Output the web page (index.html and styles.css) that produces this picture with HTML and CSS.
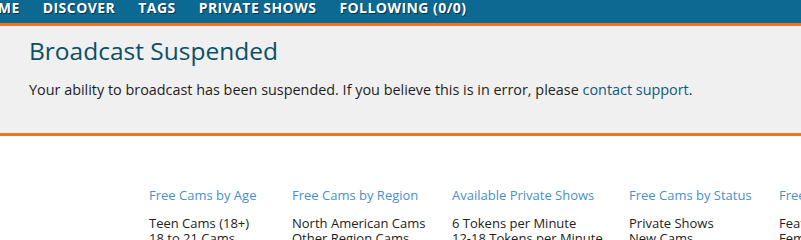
FILE: index.html
```html
<!DOCTYPE html>
<html>
<head>
<meta charset="utf-8">
<link rel="stylesheet" href="styles.css">
</head>
<body>
<nav class="topnav">
  <ul class="nav-list">
    <li>HOME</li>
    <li>DISCOVER</li>
    <li>TAGS</li>
    <li>PRIVATE SHOWS</li>
    <li>FOLLOWING (0/0)</li>
  </ul>
</nav>
<section class="notice">
  <h1 class="notice-title">Broadcast Suspended</h1>
  <p class="notice-text">Your ability to broadcast has been suspended. If you believe this is in error, please <a class="link" href="#">contact support</a>.</p>
</section>
<footer class="footer">
  <div class="col">
    <h3 class="col-title">Free Cams by Age</h3>
    <ul class="col-list"><li>Teen Cams (18+)</li><li>18 to 21 Cams</li><li>20 to 30 Cams</li></ul>
  </div>
  <div class="col">
    <h3 class="col-title">Free Cams by Region</h3>
    <ul class="col-list"><li>North American Cams</li><li>Other Region Cams</li><li>Euro Russian Cams</li></ul>
  </div>
  <div class="col">
    <h3 class="col-title">Available Private Shows</h3>
    <ul class="col-list"><li>6 Tokens per Minute</li><li>12-18 Tokens per Minute</li><li>30-42 Tokens per Minute</li></ul>
  </div>
  <div class="col">
    <h3 class="col-title">Free Cams by Status</h3>
    <ul class="col-list"><li>Private Shows</li><li>New Cams</li><li>Gaming Cams</li></ul>
  </div>
  <div class="col">
    <h3 class="col-title">Free Cams</h3>
    <ul class="col-list"><li>Featured Cams</li><li>Female Cams</li><li>Male Cams</li></ul>
  </div>
</footer>
</body>
</html>
```
FILE: styles.css
```css
html, body {
  margin: 0;
  padding: 0;
  background: #ffffff;
  font-family: "Open Sans", "DejaVu Sans", sans-serif;
  overflow: hidden;
}
.topnav {
  background: #0c6a92;
  border-bottom: 3px solid #f47321;
  height: 23px;
  overflow: hidden;
}
.nav-list {
  list-style: none;
  margin: 0 0 0 -25px;
  padding: 0;
  display: flex;
  gap: 23px;
  white-space: nowrap;
}
.nav-list li {
  color: #ffffff;
  font-size: 14px;
  font-weight: 700;
  line-height: 16px;
  letter-spacing: 0.45px;
  text-shadow: 1px 1px 0 #06334a;
}
.notice {
  background: #f0f0f0;
  border-bottom: 3px solid #f47321;
  padding: 11px 29px 0;
  height: 96px;
}
.notice-title {
  margin: 0;
  font-size: 24.5px;
  font-weight: 500;
  line-height: 28px;
  color: #0a5068;
}
.notice-text {
  margin: 16px 0 0;
  font-size: 14.4px;
  line-height: 18px;
  color: #1e1e1e;
}
.link {
  color: #0a5a84;
  text-decoration: none;
}
.footer {
  display: grid;
  grid-template-columns: 113px 130px 147px 120px auto;
  column-gap: 30px;
  padding: 51px 0 0 149px;
}
.col-title {
  margin: 0;
  font-size: 13px;
  font-weight: 500;
  line-height: 16px;
  color: #4a8fcc;
  white-space: nowrap;
}
.col-list {
  list-style: none;
  margin: 13px 0 0;
  padding: 0;
}
.col-list li {
  font-size: 13px;
  line-height: 15px;
  color: #222222;
  white-space: nowrap;
}
```
